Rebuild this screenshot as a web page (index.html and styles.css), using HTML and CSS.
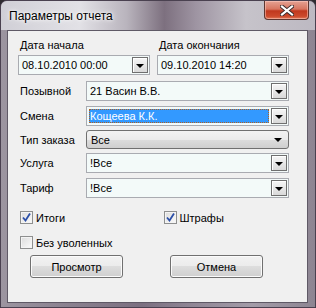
FILE: index.html
```html
<!DOCTYPE html>
<html lang="ru">
<head>
    <meta charset="UTF-8">
    <title>Параметры отчета</title>
    <link rel="stylesheet" href="styles.css">
</head>
<body>
    <div class="window">
        <div class="titlebar">
            <span class="title">Параметры отчета</span>
            <div class="close-btn">
                <svg width="14" height="11" viewBox="0 0 14 11">
                    <path d="M2 1.5 L12 9.5 M12 1.5 L2 9.5" stroke="#3a2a2a" stroke-width="4" stroke-linecap="square"/>
                    <path d="M2 1.5 L12 9.5 M12 1.5 L2 9.5" stroke="#ffffff" stroke-width="2.2" stroke-linecap="square"/>
                </svg>
            </div>
        </div>

        <div class="client">
            <div class="dates">
                <div class="date-field">
                    <div class="label">Дата начала</div>
                    <div class="combo">
                        <span class="value">08.10.2010 00:00</span>
                        <span class="drop"><i class="arrow"></i></span>
                    </div>
                </div>
                <div class="date-field second">
                    <div class="label">Дата окончания</div>
                    <div class="combo">
                        <span class="value">09.10.2010 14:20</span>
                        <span class="drop"><i class="arrow"></i></span>
                    </div>
                </div>
            </div>

            <div class="form-row row-callsign">
                <span class="row-label">Позывной</span>
                <div class="combo wide">
                    <span class="value">21 Васин В.В.</span>
                    <span class="drop"><i class="arrow"></i></span>
                </div>
            </div>
            <div class="form-row row-shift">
                <span class="row-label">Смена</span>
                <div class="combo wide">
                    <span class="value selected">Кощеева К.К.</span>
                    <span class="drop"><i class="arrow"></i></span>
                </div>
            </div>
            <div class="form-row row-type">
                <span class="row-label">Тип заказа</span>
                <div class="droplist">
                    <span class="value">Все</span>
                    <i class="arrow"></i>
                </div>
            </div>
            <div class="form-row row-service">
                <span class="row-label">Услуга</span>
                <div class="combo wide">
                    <span class="value">!Все</span>
                    <span class="drop"><i class="arrow"></i></span>
                </div>
            </div>
            <div class="form-row row-tariff">
                <span class="row-label">Тариф</span>
                <div class="combo wide">
                    <span class="value">!Все</span>
                    <span class="drop"><i class="arrow"></i></span>
                </div>
            </div>

            <div class="checks">
                <label class="check">
                    <span class="box checked">
                        <svg width="9" height="9" viewBox="0 0 9 9"><path d="M1 4.5 L3.5 7.5 L8 0.5" fill="none" stroke="#2b4fa8" stroke-width="1.8"/></svg>
                    </span>
                    Итоги
                </label>
                <label class="check fines">
                    <span class="box checked">
                        <svg width="9" height="9" viewBox="0 0 9 9"><path d="M1 4.5 L3.5 7.5 L8 0.5" fill="none" stroke="#2b4fa8" stroke-width="1.8"/></svg>
                    </span>
                    Штрафы
                </label>
            </div>
            <div class="checks second-line">
                <label class="check">
                    <span class="box"></span>
                    Без уволенных
                </label>
            </div>

            <div class="buttons">
                <button class="btn">Просмотр</button>
                <button class="btn">Отмена</button>
            </div>
        </div>
    </div>
</body>
</html>
```

FILE: styles.css
```css
body {
    margin: 0;
    background: #2e2b30;
    font-family: 'Liberation Sans', Arial, sans-serif;
    font-size: 11px;
    color: #000;
}

.window {
    width: 316px;
    height: 308px;
    box-sizing: border-box;
    border: 1px solid #4a4150;
    border-radius: 7px 7px 0 0;
    padding: 0 7px 4px 6px;
    display: flex;
    flex-direction: column;
    background: linear-gradient(90deg, #9c95a0 0%, #8b8290 20%, #7b6f80 45%, #8f8594 60%, #a39ca8 80%, #8d8592 100%);
}

.titlebar {
    height: 29px;
    margin: 0 -7px 0 -6px;
    padding: 0 7px 0 8px;
    border-radius: 6px 6px 0 0;
    display: flex;
    align-items: flex-start;
    justify-content: space-between;
    background: linear-gradient(90deg, #d0cfd6 0%, #e2e1e6 25%, #b9b4bd 40%, #7d707f 52%, #9e94a2 62%, #c6c3ca 78%, #bdb9c2 100%);
}

.title {
    font-size: 12px;
    margin-top: 8px;
    text-shadow: 0 0 6px #ffffff, 0 0 3px #ffffff;
}

.close-btn {
    width: 45px;
    height: 19px;
    box-sizing: border-box;
    margin-right: -1px;
    border: 1px solid #5d3630;
    border-top: none;
    border-radius: 0 0 4px 4px;
    display: flex;
    align-items: center;
    justify-content: center;
    background: linear-gradient(#e5a293 0%, #d77560 45%, #c0381e 55%, #cc4a2c 85%, #e07c5c 100%);
    box-shadow: inset 0 0 0 1px rgba(255, 210, 200, 0.5);
}

.client {
    flex: 1;
    background: #f0f0f0;
    border: 1px solid #5f5966;
    padding: 8px 0 0 10px;
}

.dates {
    display: flex;
}

.date-field {
    width: 132px;
}

.date-field.second {
    margin-left: 7px;
}

.label {
    height: 13px;
    line-height: 13px;
    padding-left: 2px;
    margin-bottom: 3px;
}

.combo {
    height: 20px;
    box-sizing: border-box;
    border: 1px solid #a9abb1;
    background: #f3faf9;
    display: flex;
    align-items: center;
    justify-content: space-between;
    padding: 0 1px 0 2px;
}

.combo.wide {
    width: 203px;
}

.value {
    padding-left: 1px;
    line-height: 14px;
}

.value.selected {
    flex: 1;
    margin-right: 2px;
    background: #3399ff;
    color: #fff;
    outline: 1px dotted #b06020;
    outline-offset: -1px;
}

.drop {
    width: 16px;
    height: 16px;
    box-sizing: border-box;
    border: 1px solid #6f6f6f;
    background: linear-gradient(#f6f6f6, #d9d9d9);
    box-shadow: inset 1px 1px 0 #ffffff;
    display: flex;
    align-items: center;
    justify-content: center;
}

.arrow {
    width: 0;
    height: 0;
    border-left: 4px solid transparent;
    border-right: 4px solid transparent;
    border-top: 4px solid #000;
    margin-top: 1px;
}

.form-row {
    display: flex;
    align-items: center;
    margin-left: -1px;
}

.row-label {
    width: 66px;
    padding-left: 3px;
}

.row-callsign { margin-top: 6px; }
.row-shift { margin-top: 5px; }
.row-type { margin-top: 4px; }
.row-service { margin-top: 4px; }
.row-tariff { margin-top: 5px; }

.droplist {
    width: 203px;
    height: 19px;
    box-sizing: border-box;
    border: 1px solid #707070;
    border-radius: 3px;
    background: linear-gradient(#f3f3f3 0%, #ebebeb 50%, #dddddd 50%, #cfcfcf 100%);
    display: flex;
    align-items: center;
    justify-content: space-between;
    padding: 0 6px 0 3px;
}

.checks {
    display: flex;
    margin-top: 13px;
    margin-left: 2px;
}

.checks.second-line {
    margin-top: 12px;
}

.check {
    display: flex;
    align-items: center;
    gap: 3px;
    width: 144px;
    height: 13px;
}

.box {
    width: 13px;
    height: 13px;
    box-sizing: border-box;
    border: 1px solid #8e8f8f;
    background: linear-gradient(135deg, #dcdcdc, #fbfbfb);
    box-shadow: inset 0 0 0 1px #f4f4f4;
    display: flex;
    align-items: center;
    justify-content: center;
}

.buttons {
    display: flex;
    gap: 47px;
    margin-top: 6px;
    margin-left: 12px;
}

.btn {
    width: 93px;
    height: 23px;
    border: 1px solid #707070;
    border-radius: 3px;
    font-family: 'Liberation Sans', Arial, sans-serif;
    font-size: 11px;
    color: #000;
    background: linear-gradient(#f2f2f2 0%, #ebebeb 50%, #dddddd 50%, #cfcfcf 100%);
    box-shadow: inset 0 0 0 1px #fbfbfb;
    padding: 0;
}
```
